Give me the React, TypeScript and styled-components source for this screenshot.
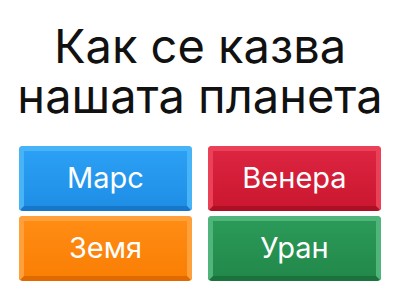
import React from 'react';
import styled, { createGlobalStyle } from 'styled-components';

const GlobalStyle = createGlobalStyle`
  html, body {
    margin: 0;
    padding: 0;
    background: #ffffff;
  }
  body {
    font-family: Inter, "Noto Sans", "Liberation Sans", sans-serif;
  }
`;

type Tone = 'blue' | 'red' | 'orange' | 'green';

const TONES: Record<Tone, { light: string; top: string; bottom: string; dark: string }> = {
  blue: { light: '#48b4f8', top: '#2ba0f5', bottom: '#1f8fe6', dark: '#1677cb' },
  red: { light: '#ea4159', top: '#dc2540', bottom: '#cc1731', dark: '#ad1024' },
  orange: { light: '#ffa03a', top: '#ff8c14', bottom: '#fa7f05', dark: '#e06a00' },
  green: { light: '#4fb57b', top: '#2b9a58', bottom: '#22894b', dark: '#1a733d' },
};

const Page = styled.div`
  width: 400px;
  height: 300px;
  display: flex;
  flex-direction: column;
  align-items: center;
`;

const Title = styled.h1`
  margin: 21px 0 0;
  font-size: 47px;
  line-height: 50px;
  font-weight: 400;
  color: #111;
  text-align: center;
`;

const Grid = styled.div`
  margin-top: 25px;
  display: grid;
  grid-template-columns: 173px 173px;
  column-gap: 16px;
  row-gap: 5px;
`;

const Answer = styled.button<{ $tone: Tone }>`
  box-sizing: border-box;
  height: 65px;
  border-radius: 4px;
  border-style: solid;
  border-width: 5px;
  border-color: ${(p) => TONES[p.$tone].light};
  border-bottom-color: ${(p) => TONES[p.$tone].dark};
  background: linear-gradient(
    ${(p) => TONES[p.$tone].top},
    ${(p) => TONES[p.$tone].bottom}
  );
  color: #fff;
  font-family: Inter, "Noto Sans", "Liberation Sans", sans-serif;
  font-size: 29px;
  line-height: 1;
  display: flex;
  align-items: center;
  justify-content: center;
  padding: 0 0 3px;
  cursor: pointer;
`;

const answers: { label: string; tone: Tone }[] = [
  { label: 'Марс', tone: 'blue' },
  { label: 'Венера', tone: 'red' },
  { label: 'Земя', tone: 'orange' },
  { label: 'Уран', tone: 'green' },
];

export default function App() {
  return (
    <Page>
      <GlobalStyle />
      <Title>
        Как се казва
        <br />
        нашата планета
      </Title>
      <Grid>
        {answers.map((a) => (
          <Answer key={a.label} $tone={a.tone}>
            {a.label}
          </Answer>
        ))}
      </Grid>
    </Page>
  );
}
